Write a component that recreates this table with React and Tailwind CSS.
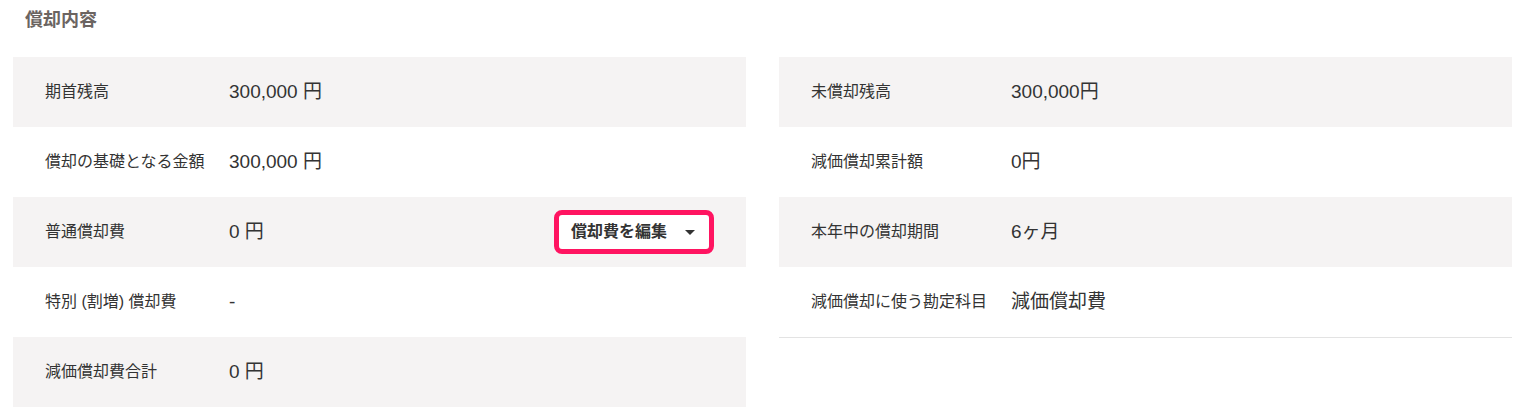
import React from 'react';

const LEFT_ROWS = [
    { label: '期首残高', value: '300,000 円' },
    { label: '償却の基礎となる金額', value: '300,000 円' },
    { label: '普通償却費', value: '0 円', edit: true },
    { label: '特別 (割増) 償却費', value: '-' },
    { label: '減価償却費合計', value: '0 円' },
];

const RIGHT_ROWS = [
    { label: '未償却残高', value: '300,000円' },
    { label: '減価償却累計額', value: '0円' },
    { label: '本年中の償却期間', value: '6ヶ月' },
    { label: '減価償却に使う勘定科目', value: '減価償却費' },
];

const Row = ({ row, index, labelWidth }) => (
    <div className={`flex items-center h-[70px] pr-8 ${index % 2 === 0 ? 'bg-[#f5f3f3]' : 'bg-white'}`}>
        <div className={`${labelWidth} shrink-0 pl-8 text-[16px] text-[#333]`}>{row.label}</div>
        <div className="flex-1 text-[19px] text-[#333]">{row.value}</div>
        {row.edit && (
            <button
                type="button"
                className="flex items-center gap-[18px] h-[44px] pl-3 pr-[14px] bg-white border-[5px] border-[#ff1461] rounded-lg text-[16px] font-bold text-[#333]"
            >
                償却費を編集
                <svg className="w-[10px] h-[5px]" viewBox="0 0 10 5" fill="#333">
                    <path d="M0 0h10L5 5z" />
                </svg>
            </button>
        )}
    </div>
);

export default function App() {
    return (
        <div className="bg-white w-[1523px] h-[418px] pl-[13px] pr-[11px] font-['Liberation_Sans','Noto_Sans_CJK_JP',sans-serif]">
            {/* 見出し */}
            <h2 className="pl-3 pt-[7px] h-[57px] text-[18px] font-bold text-[#6b6461]">償却内容</h2>

            <div className="flex gap-[33px]">
                <div className="flex-1">
                    {LEFT_ROWS.map((row, i) => (
                        <Row key={row.label} row={row} index={i} labelWidth="w-[216px]" />
                    ))}
                </div>
                <div className="flex-1">
                    <div className="border-b border-[#e3e3e3]">
                        {RIGHT_ROWS.map((row, i) => (
                            <Row key={row.label} row={row} index={i} labelWidth="w-[232px]" />
                        ))}
                    </div>
                </div>
            </div>
        </div>
    );
}
